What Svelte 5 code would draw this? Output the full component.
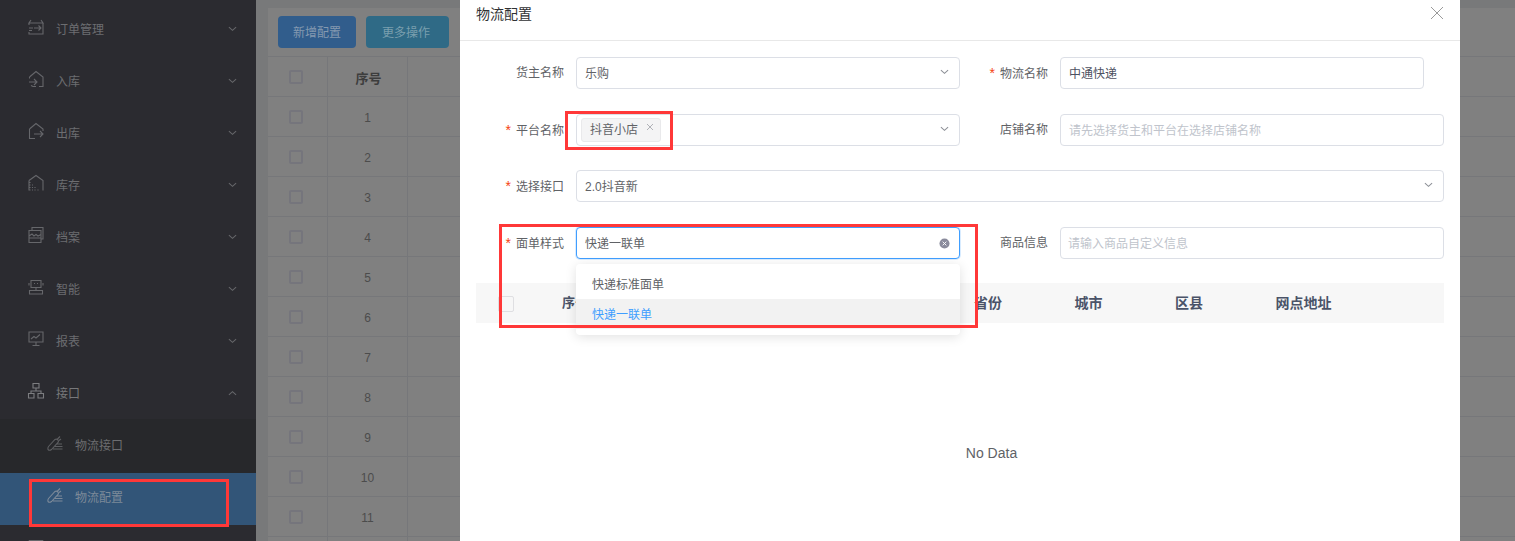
<script>
const menu = [
  { label: '订单管理', d: 'M3 1 1 4H15L13 1M1 4V6M15 4V15H1V13M1 9H5M1 11.5H4M6 9H13M10.5 6.5 13 9 10.5 11.5' },
  { label: '入库', d: 'M1.5 6 8 .5 15 6V15.5H11M1.5 6V7.5M1 11H9M6 8 9 11 6 14M3 14.5 5 15.5H8' },
  { label: '出库', d: 'M1.5 6 8 .5 15 6V8M1.5 6V15.5H7M6 11H15M12 8 15 11 12 14' },
  { label: '库存', d: 'M1 5.5 8 .5 15 5.5V15.5M1 5.5V15.5M2 7V8M2 9.5V10.5M4.5 9.5V10.5M2 12V13M4.5 12V13M7 12V13M2 14.5V15.5M4.5 14.5V15.5M7 14.5V15.5M10 14.5V15.5' },
  { label: '档案', d: 'M4 3V.5H15V12H13M1 3.5H13V15.5H1ZM1 9 4 7 6 9 8 7.5 10 9 13 7.5M1 11H13' },
  { label: '智能', d: 'M3 1.5H13V8.5H3ZM1 4V6.5M15 4V6.5M6 4.5H7M9 4.5H10M8 8.5V11.5M1.5 11.5H14.5V15H1.5Z' },
  { label: '报表', d: 'M1 1H15V11H1ZM3 8 6 5.5 8 7 12 3.5M8 11V14M4.5 14.5H11.5' },
  { label: '接口', open: true, bright: true, d: 'M5 .5H11V5H5ZM.5 10.5H6V15H.5ZM10 10.5H15.5V15H10ZM8 5V8M3 10.5V8H13V10.5' }
];
const rows = [1, 2, 3, 4, 5, 6, 7, 8, 9, 10, 11];
const carrot = 'M1.5 10.5 8 3.5Q9.5 2.5 11 4Q12 5.5 11 6.5L4.5 13.5Q2.5 15 1 13.5Q.5 12 1.5 10.5ZM10.5 3 13 .5M12 4.5 14 3M9.5 8H15M8 10.5H15.5M6 13H15.5';
</script>

<div class="page">
  <aside class="sidebar">
    {#each menu as item}
      <div class="menu-item" class:bright={item.bright}>
        <svg class="icon" viewBox="0 0 16 16"><path d={item.d} /></svg>
        <span>{item.label}</span>
        <svg class="arrow" viewBox="0 0 10 6">
          <path d={item.open ? 'M1 5 5 1.5 9 5' : 'M1 1 5 4.5 9 1'} />
        </svg>
      </div>
    {/each}
    <div class="submenu">
      <div class="sub-item">
        <svg class="icon" viewBox="0 0 16 16"><path d={carrot} /></svg>
        <span>物流接口</span>
      </div>
      <div class="sub-item active">
        <svg class="icon" viewBox="0 0 16 16"><path d={carrot} /></svg>
        <span>物流配置</span>
      </div>
    </div>
    <div class="menu-item last">
      <svg class="icon" viewBox="0 0 16 16"><path d="M1 .5H15M1 .5V15M15 .5V15" /></svg>
    </div>
  </aside>

  <main class="content">
    <div class="toolbar">
      <button class="btn blue">新增配置</button>
      <button class="btn teal">更多操作</button>
    </div>
    <div class="grid-row head">
      <div class="c1"><i class="check"></i></div>
      <div class="c2">序号</div>
      <div class="c3"></div>
    </div>
    {#each rows as n}
      <div class="grid-row">
        <div class="c1"><i class="check"></i></div>
        <div class="c2">{n}</div>
        <div class="c3"></div>
      </div>
    {/each}
    <div class="grid-row">
      <div class="c1"></div>
      <div class="c2"></div>
      <div class="c3"></div>
    </div>
  </main>

  <section class="modal">
    <header class="modal-head">
      <h3>物流配置</h3>
      <svg class="close" viewBox="0 0 14 14"><path d="M1 1 13 13M13 1 1 13" /></svg>
    </header>

    <div class="form">
      <label class="lbl">货主名称</label>
      <div class="field">乐购
        <svg class="chev" viewBox="0 0 10 6"><path d="M1 1 5 4.5 9 1" /></svg>
      </div>
      <label class="lbl req">物流名称</label>
      <div class="field short value">中通快递</div>

      <label class="lbl req">平台名称</label>
      <div class="field">
        <span class="tag">抖音小店<svg viewBox="0 0 8 8"><path d="M1 1 7 7M7 1 1 7" /></svg></span>
        <svg class="chev" viewBox="0 0 10 6"><path d="M1 1 5 4.5 9 1" /></svg>
      </div>
      <label class="lbl">店铺名称</label>
      <div class="field ph">请先选择货主和平台在选择店铺名称</div>

      <label class="lbl req">选择接口</label>
      <div class="field wide">2.0抖音新
        <svg class="chev" viewBox="0 0 10 6"><path d="M1 1 5 4.5 9 1" /></svg>
      </div>

      <label class="lbl req">面单样式</label>
      <div class="field focus">快递一联单
        <svg class="clear" viewBox="0 0 12 12">
          <circle cx="6" cy="6" r="5.5" />
          <path d="M4 4 8 8M8 4 4 8" />
        </svg>
        <ul class="dropdown">
          <li>快递标准面单</li>
          <li class="on">快递一联单</li>
        </ul>
      </div>
      <label class="lbl">商品信息</label>
      <div class="field ph tight">请输入商品自定义信息</div>
    </div>

    <div class="table-head">
      <div class="th-check"><i></i></div>
      <div class="th-no">序号</div>
      <div class="th">省份</div>
      <div class="th">城市</div>
      <div class="th">区县</div>
      <div class="th">网点地址</div>
    </div>
    <div class="empty">No Data</div>
  </section>

  <div class="mark mark-menu"></div>
  <div class="mark mark-tag"></div>
  <div class="mark mark-style"></div>
</div>

<style>
  :global(body) {
    margin: 0;
    overflow: hidden;
  }

  .page {
    position: relative;
    display: flex;
    width: 1515px;
    height: 541px;
    overflow: hidden;
    background: #78797a;
    font-family: "Liberation Sans", "Noto Sans CJK SC", sans-serif;
    font-size: 12px;
  }

  /* sidebar */
  .sidebar {
    width: 256px;
    flex-shrink: 0;
    padding-top: 3px;
    background: #2b2b30;
    color: #6c6d70;
  }

  .menu-item {
    display: flex;
    align-items: center;
    height: 52px;
    padding-left: 28px;
    box-sizing: border-box;
  }

  .menu-item.bright {
    color: #77787a;
  }

  .menu-item span {
    margin: -2px 0 0 12px;
  }

  .icon {
    width: 16px;
    height: 16px;
    margin-top: -4px;
    overflow: visible;
  }

  .icon path {
    fill: none;
    stroke: #66676b;
    stroke-width: 1.1;
  }

  .bright .icon path {
    stroke: #7c7d80;
  }

  .arrow {
    width: 9px;
    height: 6px;
    margin-left: auto;
    margin-right: 19px;
  }

  .arrow path {
    fill: none;
    stroke: #66676a;
    stroke-width: 1.2;
  }

  .submenu {
    padding-top: 2px;
    background: #27282b;
  }

  .sub-item {
    display: flex;
    align-items: center;
    height: 52px;
    padding: 0 0 3px 47px;
    box-sizing: border-box;
  }

  .sub-item span {
    margin: -2px 0 0 12px;
  }

  .sub-item .icon path {
    stroke: #5d5e61;
  }

  .sub-item.active {
    background: #325578;
    color: #7d8a99;
  }

  .sub-item.active .icon path {
    stroke: #7d8a99;
  }

  .menu-item.last {
    align-items: flex-start;
    padding-top: 19px;
  }

  /* page behind the dialog */
  .content {
    flex: 1;
    padding: 8px 0 0 12px;
    color: #4c4c4c;
  }

  .toolbar {
    display: flex;
    gap: 10px;
    height: 48px;
    padding: 8px 0 0 10px;
    box-sizing: border-box;
    background: #808080;
  }

  .btn {
    height: 32px;
    padding: 0 0 2px;
    border: 0;
    border-radius: 4px;
    font: inherit;
    color: #8499b0;
  }

  .btn.blue {
    width: 78px;
    background: #315d8c;
  }

  .btn.teal {
    width: 83px;
    padding-right: 3px;
    background: #2f6a86;
    color: #7a9fae;
  }

  .grid-row {
    display: flex;
    height: 40px;
    box-sizing: border-box;
    border-top: 1px solid #76777a;
    background: #808080;
  }

  .grid-row.head {
    font-size: 13px;
    font-weight: bold;
    color: #3d3d3d;
  }

  .grid-row.head .c2 {
    padding-left: 2px;
  }

  .c1,
  .c2 {
    display: flex;
    align-items: center;
    justify-content: center;
    box-sizing: border-box;
    border-right: 1px solid #76777a;
  }

  .c1 {
    width: 60px;
    padding-right: 4px;
  }

  .c2 {
    width: 80px;
    padding-top: 2px;
  }

  .check {
    display: block;
    width: 10px;
    height: 10px;
    border: 2px solid #75757c;
    border-radius: 2px;
  }

  /* dialog */
  .modal {
    position: absolute;
    top: 0;
    bottom: 0;
    left: 460px;
    width: 1000px;
    background: #fff;
  }

  .modal-head {
    position: relative;
    height: 41px;
    box-sizing: border-box;
    padding: 4px 16px 0;
    border-bottom: 1px solid #e8e8e8;
  }

  .modal-head h3 {
    margin: 0;
    font-size: 14px;
    font-weight: normal;
    line-height: 20px;
    color: #303133;
  }

  .close {
    position: absolute;
    top: 6px;
    right: 16px;
    width: 14px;
    height: 14px;
  }

  .close path {
    fill: none;
    stroke: #9a9a9a;
  }

  .form {
    display: grid;
    grid-template-columns: 100px 384px 100px 384px;
    grid-auto-rows: 32px;
    row-gap: 24.67px;
    padding: 16px 16px 0;
    color: #606266;
  }

  .lbl {
    padding-right: 12px;
    line-height: 32px;
    text-align: right;
  }

  .lbl.req::before {
    content: "*";
    margin-right: 5px;
    font-size: 14px;
    color: #f5420f;
  }

  .field {
    position: relative;
    box-sizing: border-box;
    padding: 1px 8px 0;
    border: 1px solid #dcdfe6;
    border-radius: 4px;
    line-height: 30px;
    background: #fff;
  }

  .field.short {
    width: 364px;
  }

  .field.wide {
    grid-column: span 3;
  }

  .field.ph {
    color: #c0c4cc;
  }

  .field.tight {
    padding-left: 7px;
  }

  .field.value {
    color: #4d5161;
  }

  .field.focus {
    border-color: #409eff;
    box-shadow: 0 0 0 1px rgba(64, 158, 255, 0.2);
  }

  .chev {
    position: absolute;
    top: 11px;
    right: 10px;
    width: 9px;
    height: 6px;
  }

  .chev path {
    fill: none;
    stroke: #8d9097;
    stroke-width: 1.2;
  }

  .tag {
    display: inline-flex;
    align-items: center;
    height: 24px;
    margin: 2px 0 0 -4px;
    padding: 0 6px 0 8px;
    box-sizing: border-box;
    border: 1px solid #e9e9eb;
    border-radius: 3px;
    line-height: 22px;
    vertical-align: top;
    background: #f4f4f5;
  }

  .tag svg {
    width: 8px;
    height: 8px;
    margin: -6px 0 0 8px;
  }

  .tag path {
    fill: none;
    stroke: #b0b2b8;
  }

  .clear {
    position: absolute;
    top: 10px;
    right: 9px;
    width: 11px;
    height: 11px;
  }

  .clear circle {
    fill: #8a8b9c;
  }

  .clear path {
    fill: none;
    stroke: #fff;
  }

  .dropdown {
    position: absolute;
    z-index: 2;
    top: 36px;
    left: -1px;
    right: -1px;
    margin: 0;
    padding: 5px 0 6px;
    list-style: none;
    border-radius: 4px;
    background: #fff;
    box-shadow: 0 2px 12px rgba(0, 0, 0, 0.12);
  }

  .dropdown li {
    height: 30px;
    padding-left: 16px;
    line-height: 32px;
  }

  .dropdown li.on {
    color: #409eff;
    background: #f2f2f2;
  }

  .table-head {
    display: flex;
    align-items: center;
    height: 40px;
    margin: 24px 16px 0;
    background: #f7f7f7;
    font-size: 13px;
    font-weight: bold;
    color: #4a5368;
  }

  .th-check {
    width: 86px;
    padding: 2px 0 0 22px;
    box-sizing: border-box;
  }

  .th-check i {
    display: block;
    width: 16px;
    height: 16px;
    box-sizing: border-box;
    border: 1px solid #dfdfe2;
    border-radius: 2px;
  }

  .th-no {
    width: 412px;
    margin-top: -2px;
  }

  .th {
    width: 100.5px;
    margin-top: -2px;
    font-size: 14px;
  }

  .empty {
    margin-top: 119px;
    padding-left: 63px;
    font-size: 14px;
    line-height: 22px;
    text-align: center;
    color: #606266;
  }

  /* red boxes drawn on the screenshot */
  .mark {
    position: absolute;
    z-index: 3;
    box-sizing: border-box;
    border: 3px solid #ff3838;
  }

  .mark-menu {
    top: 479px;
    left: 29px;
    width: 200px;
    height: 48px;
  }

  .mark-tag {
    top: 111px;
    left: 565px;
    width: 108px;
    height: 39px;
  }

  .mark-style {
    top: 224px;
    left: 499px;
    width: 479px;
    height: 104px;
  }
</style>
